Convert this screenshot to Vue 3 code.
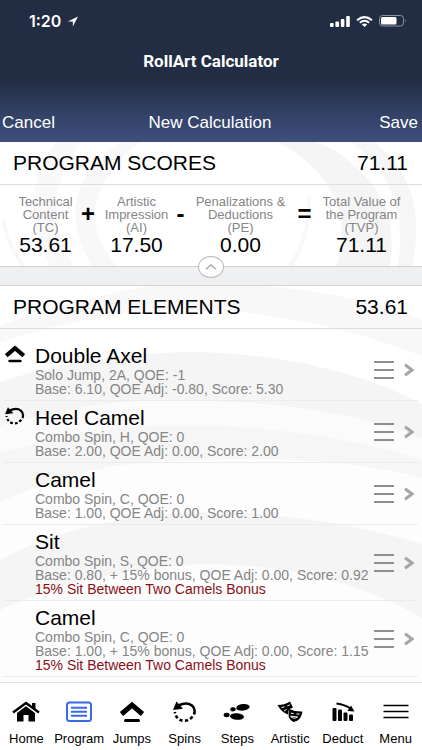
<template>
  <div class="app">
    <header class="top">
      <div class="status">
        <span class="time">1:20</span>
        <svg width="12" height="11" viewBox="0 0 12 12">
          <path d="M11.5 0.5L0.5 6h5.3v5.5z" fill="#fff" />
        </svg>
        <svg class="signal" width="20" height="11" viewBox="0 0 20 11" fill="#fff">
          <rect x="0" y="7" width="3.600" height="4" rx="1" />
          <rect x="5.400" y="5.500" width="3.600" height="5.500" rx="1" />
          <rect x="10.800" y="3" width="3.600" height="8" rx="1" />
          <rect x="16.200" y="0" width="3.600" height="11" rx="1" />
        </svg>
        <svg width="17" height="11" viewBox="0 0 17 11" fill="none" stroke="#fff" stroke-width="2">
          <path d="M1 4.200Q8.500 -2 16 4.200" />
          <path d="M3.800 6.800Q8.500 2.600 13.200 6.800" />
          <path d="M5.800 8.600Q8.500 6.200 11.200 8.600L8.500 11z" fill="#fff" stroke="none" />
        </svg>
        <svg width="28" height="12" viewBox="0 0 28 12">
          <rect x="0.500" y="0.500" width="24" height="10.500" rx="3" fill="none" stroke="#8b92a1" />
          <rect x="2" y="2" width="15.500" height="7.500" rx="1.500" fill="#fff" />
          <path d="M26 4q1.500 1.700 0 3.600z" fill="#8b92a1" />
        </svg>
      </div>
      <h1>RollArt Calculator</h1>
      <nav class="actions">
        <button type="button">Cancel</button>
        <span>New Calculation</span>
        <button type="button">Save</button>
      </nav>
    </header>

    <section class="scores">
      <svg class="rings" viewBox="0 0 422 124" preserveAspectRatio="none" fill="none">
        <path d="M56 0Q14 56 50 124H74Q34 60 82 0z" fill="#f9f9f9" />
        <path d="M120 0Q48 50 92 124H116Q64 60 140 0z" fill="#f8f8f8" />
        <path d="M278 0Q334 30 341 78Q344 104 336 124H390Q400 60 352 22Q334 6 316 0z" fill="#f5f5f5" />
        <path d="M352 0Q410 44 398 124H412Q430 44 374 0z" fill="#f6f6f6" />
        <path d="M309 54Q310 96 290 124" stroke="#f8f8f8" stroke-width="4" />
        <path d="M3 76Q8 106 24 124" stroke="#f8f8f8" stroke-width="3" />
      </svg>
      <h2><span>PROGRAM SCORES</span><span>71.11</span></h2>
      <div class="formula">
        <template v-for="(part, i) in parts" :key="i">
          <span v-if="part.op" class="op">{{ part.op }}</span>
          <div class="part">
            <p>{{ part.label }}</p>
            <strong>{{ part.value }}</strong>
          </div>
        </template>
      </div>
      <button
        type="button"
        class="collapse"
        aria-label="Toggle program scores"
      >
        <svg width="12" height="6" viewBox="0 0 12 6" fill="none" stroke="#a9a9ad" stroke-width="1.400">
          <path d="M1 5.300L6 1l5 4.300" />
        </svg>
      </button>
    </section>

    <div class="gap"></div>

    <section class="elements">
      <svg class="rings" viewBox="0 0 422 396" preserveAspectRatio="none">
        <path d="M0 40Q70 14 150 0H262Q350 6 422 34V70Q330 34 220 24Q110 20 0 56z" fill="#f8f8f8" />
        <path d="M0 96Q90 66 200 66Q330 70 422 118V396H0z" fill="#f5f5f5" />
        <path d="M0 140Q110 106 230 116Q340 120 422 152V396H0z" fill="#fbfbfb" />
        <path d="M0 168Q90 138 200 139Q330 144 422 174V396H0z" fill="#f6f6f6" />
        <path d="M0 216Q90 172 200 174Q330 168 422 192V396H0z" fill="#fdfdfd" />
        <path d="M0 274Q90 226 220 226Q330 230 422 258V332Q330 278 200 278Q80 286 0 324z" fill="#f5f5f5" />
      </svg>
      <h2><span>PROGRAM ELEMENTS</span><span>53.61</span></h2>
      <ul>
        <li v-for="(el, i) in elements" :key="i">
          <div class="kind">
            <svg v-if="el.icon" width="20" height="20" viewBox="0 0 24 24">
              <g v-html="icons[el.icon]"></g>
            </svg>
          </div>
          <div class="info">
            <h3>{{ el.name }}</h3>
            <p>{{ el.code }}</p>
            <p>{{ el.score }}</p>
            <p v-if="el.bonus" class="bonus">{{ el.bonus }}</p>
          </div>
          <button type="button" aria-label="Reorder">
            <svg width="20" height="18" viewBox="0 0 20 18" stroke="#8f8f8f" stroke-width="2">
              <path d="M0 1h20M0 9h20M0 17h20" />
            </svg>
          </button>
          <button type="button" aria-label="Open">
            <svg width="10" height="14" viewBox="0 0 10 14" fill="none" stroke="#a6a6a6" stroke-width="3">
              <path d="M1 1.800L8 7l-7 5.200" />
            </svg>
          </button>
        </li>
      </ul>
    </section>

    <nav class="tabs">
      <button
        v-for="tab in tabs"
        :key="tab"
        type="button"
        :class="{ active: tab === current }"
        @click="current = tab"
      >
        <svg width="28" height="24" viewBox="-2 0 28 24">
          <g v-html="icons[tab]"></g>
        </svg>
        <span>{{ tab }}</span>
      </button>
    </nav>
  </div>
</template>
<script setup>
import { ref } from "vue";

const parts = [
  { label: "Technical\nContent\n(TC)", value: "53.61" },
  { op: "+", label: "Artistic\nImpression\n(AI)", value: "17.50" },
  { op: "-", label: "Penalizations &\nDeductions\n(PE)", value: "0.00" },
  { op: "=", label: "Total Value of\nthe Program\n(TVP)", value: "71.11" },
];

const elements = [
  {
    icon: "Jumps",
    name: "Double Axel",
    code: "Solo Jump, 2A, QOE: -1",
    score: "Base: 6.10, QOE Adj: -0.80, Score: 5.30",
  },
  {
    icon: "Spins",
    name: "Heel Camel",
    code: "Combo Spin, H, QOE: 0",
    score: "Base: 2.00, QOE Adj: 0.00, Score: 2.00",
  },
  {
    name: "Camel",
    code: "Combo Spin, C, QOE: 0",
    score: "Base: 1.00, QOE Adj: 0.00, Score: 1.00",
  },
  {
    name: "Sit",
    code: "Combo Spin, S, QOE: 0",
    score: "Base: 0.80, + 15% bonus, QOE Adj: 0.00, Score: 0.92",
    bonus: "15% Sit Between Two Camels Bonus",
  },
  {
    name: "Camel",
    code: "Combo Spin, C, QOE: 0",
    score: "Base: 1.00, + 15% bonus, QOE Adj: 0.00, Score: 1.15",
    bonus: "15% Sit Between Two Camels Bonus",
  },
];

const tabs = [
  "Home",
  "Program",
  "Jumps",
  "Spins",
  "Steps",
  "Artistic",
  "Deduct",
  "Menu",
];
const current = ref("Program");

const icons = {
  Home: `<path d="M-1 12.500L12 3l13 9.500" fill="none" stroke="currentColor" stroke-width="2.400"/>
    <path d="M18 3h3.500v7L18 7.500z"/><path d="M3 13l9-6.800 9 6.800v8.500h-6.500V15h-5v6.500H3z"/>`,
  Program: `<g fill="none" stroke="currentColor"><rect x="0" y="2.500" width="24" height="18.500" rx="2.500" stroke-width="2"/>
    <path d="M4 7.800h16M4 11.800h16M4 15.800h16" stroke-width="2"/></g>`,
  Jumps: `<g fill="none" stroke="currentColor"><path d="M1.500 14L12 5l10.500 9" stroke-width="5"/>
    <path d="M5.500 20.500h13" stroke-width="3" stroke-linecap="round"/></g>`,
  Spins: `<g fill="none" stroke="currentColor" stroke-width="2.600">
    <path d="M5.500 5.500Q13.500 1.500 19 5.500Q23 9 21 14.500"/>
    <path d="M19.500 16.500Q16 20.800 11 20.800Q3.500 20.500 1.800 12" stroke-dasharray="3.300 2.300"/></g>
    <path d="M3.500 1.500L0 10l10-1.300z"/>`,
  Steps: `<ellipse cx="18" cy="7.300" rx="6.800" ry="3.300" transform="rotate(-7 18 7.300)"/>
    <ellipse cx="8" cy="9.300" rx="2.800" ry="2.100" transform="rotate(-10 8 9.300)"/>
    <ellipse cx="12" cy="16.500" rx="7" ry="3.300" transform="rotate(5 12 16.500)"/>
    <ellipse cx="1.600" cy="15" rx="3" ry="2.200"/>`,
  Artistic: `<path d="M-.5 5Q6.500 5 12 1.500L15 7.500Q9.500 9 10 14.500Q3 12-.5 5z"/>
    <path d="M11.500 9Q17 11.800 24.500 11.500Q23 21 15.500 22Q8 18 11.500 9z"/>
    <g fill="none" stroke="#fff" stroke-width="1"><path d="M3.500 7.500l3-.7M9.300 6l2.500-1.200M6 11l2.500-1.500"/>
    <path d="M12.800 13l3 .8M18.500 14.200l3-.3M12.500 16.200Q15.500 19.800 19.500 17z"/></g>`,
  Deduct: `<rect x="1.500" y="8" width="4" height="13" rx="1"/><rect x="7" y="9.500" width="4" height="11.500" rx="1"/>
    <rect x="12.500" y="12.500" width="4" height="8.500" rx="1"/><rect x="18" y="14.500" width="4" height="6.500" rx="1"/>
    <path d="M5.500 3.500Q14 4.500 20 9" fill="none" stroke="currentColor" stroke-width="2"/><path d="M20 5.500l3.500 6-7-.5z"/>`,
  Menu: `<path d="M-0.500 5.500h25M-0.500 11.500h25M-0.500 17.500h25" fill="none" stroke="currentColor" stroke-width="1.500"/>`,
};
</script>
<style>
body {
  margin: 0;
}
</style>
<style scoped>
.app {
  display: flex;
  flex-direction: column;
  min-height: 100vh;
  background: #fff;
  color: #000;
  font-family: "Liberation Sans", Arial, sans-serif;
}
h1,
h2,
h3,
p,
ul {
  margin: 0;
  padding: 0;
  font-weight: normal;
}
button {
  padding: 0;
  border: 0;
  background: none;
  color: inherit;
  font: inherit;
  cursor: pointer;
}
svg {
  display: block;
}
.top {
  padding-bottom: 8px;
  background: linear-gradient(#222c43 0, #222c43 56%, #303e60 76%, #3e4f7d);
  color: #fff;
}
.status {
  display: flex;
  align-items: center;
  gap: 6px;
  height: 42px;
  padding: 0 15px 0 29px;
}
.time {
  font: 600 16px/20px Inter, sans-serif;
}
.signal {
  margin-left: auto;
}
h1 {
  font-family: Roboto, "Liberation Sans", sans-serif;
  font-size: 17px;
  font-weight: bold;
  line-height: 20px;
  padding: 9px 0 41px;
  text-align: center;
}
.actions {
  display: grid;
  grid-template-columns: 1fr auto 1fr;
  padding: 0 4px 0 2px;
  font-size: 17px;
  line-height: 22px;
}
.actions button:first-child {
  justify-self: start;
}
.actions button:last-child {
  justify-self: end;
}
.scores,
.elements {
  position: relative;
  z-index: 0;
}
.scores {
  z-index: 1;
  border-bottom: 1px solid #d0d0d2;
}
.elements {
  flex: 1;
}
.rings {
  position: absolute;
  inset: 0;
  z-index: -1;
  width: 100%;
  height: 100%;
}
h2 {
  display: flex;
  justify-content: space-between;
  padding: 0 14px 0 13px;
  border-bottom: 1px solid #dedede;
  font-size: 21px;
  line-height: 42px;
}
.formula {
  display: grid;
  grid-template-columns: 63fr 22fr 75fr 13fr 107fr 21fr 93fr;
  padding: 10px 14px;
  text-align: center;
}
.part {
  display: flex;
  flex-direction: column;
  align-items: center;
}
.part p {
  color: #858585;
  font-size: 13px;
  line-height: 13px;
  white-space: pre;
}
.part strong {
  font-size: 21px;
  font-weight: normal;
  line-height: 22px;
}
.op {
  font-size: 24px;
  font-weight: bold;
  line-height: 38px;
}
.collapse {
  position: absolute;
  left: 50%;
  bottom: -12px;
  display: grid;
  place-items: center;
  width: 26px;
  height: 22px;
  margin-left: -13px;
  border: 1px solid #bbbbbf;
  border-radius: 50%;
  background: #fff;
}
.gap {
  height: 18px;
  border-bottom: 1px solid #d4d4d6;
  background: #eff0f2;
}
ul {
  padding: 10px 4px 0;
  list-style: none;
}
li {
  display: flex;
  align-items: center;
  gap: 10px;
  padding: 5px 4px 4px 1px;
  border-bottom: 1px solid #ececec;
}
.kind {
  align-self: flex-start;
  width: 20px;
}
.info {
  flex: 1;
  min-width: 0;
  margin-right: -10px;
  white-space: nowrap;
}
h3 {
  font-size: 21px;
  line-height: 24px;
}
.info p {
  color: #858585;
  font-size: 14px;
  line-height: 14px;
}
.info .bonus {
  color: #8b1016;
}
.tabs {
  display: grid;
  grid-template-columns: repeat(8, 1fr);
  border-top: 1px solid #e2e2e2;
  background: #fff;
}
.tabs button {
  display: flex;
  flex-direction: column;
  align-items: center;
  gap: 7px;
  padding: 17px 0 4px;
  font-size: 13px;
  line-height: 15px;
}
.active svg {
  color: #3b68e8;
}
</style>
